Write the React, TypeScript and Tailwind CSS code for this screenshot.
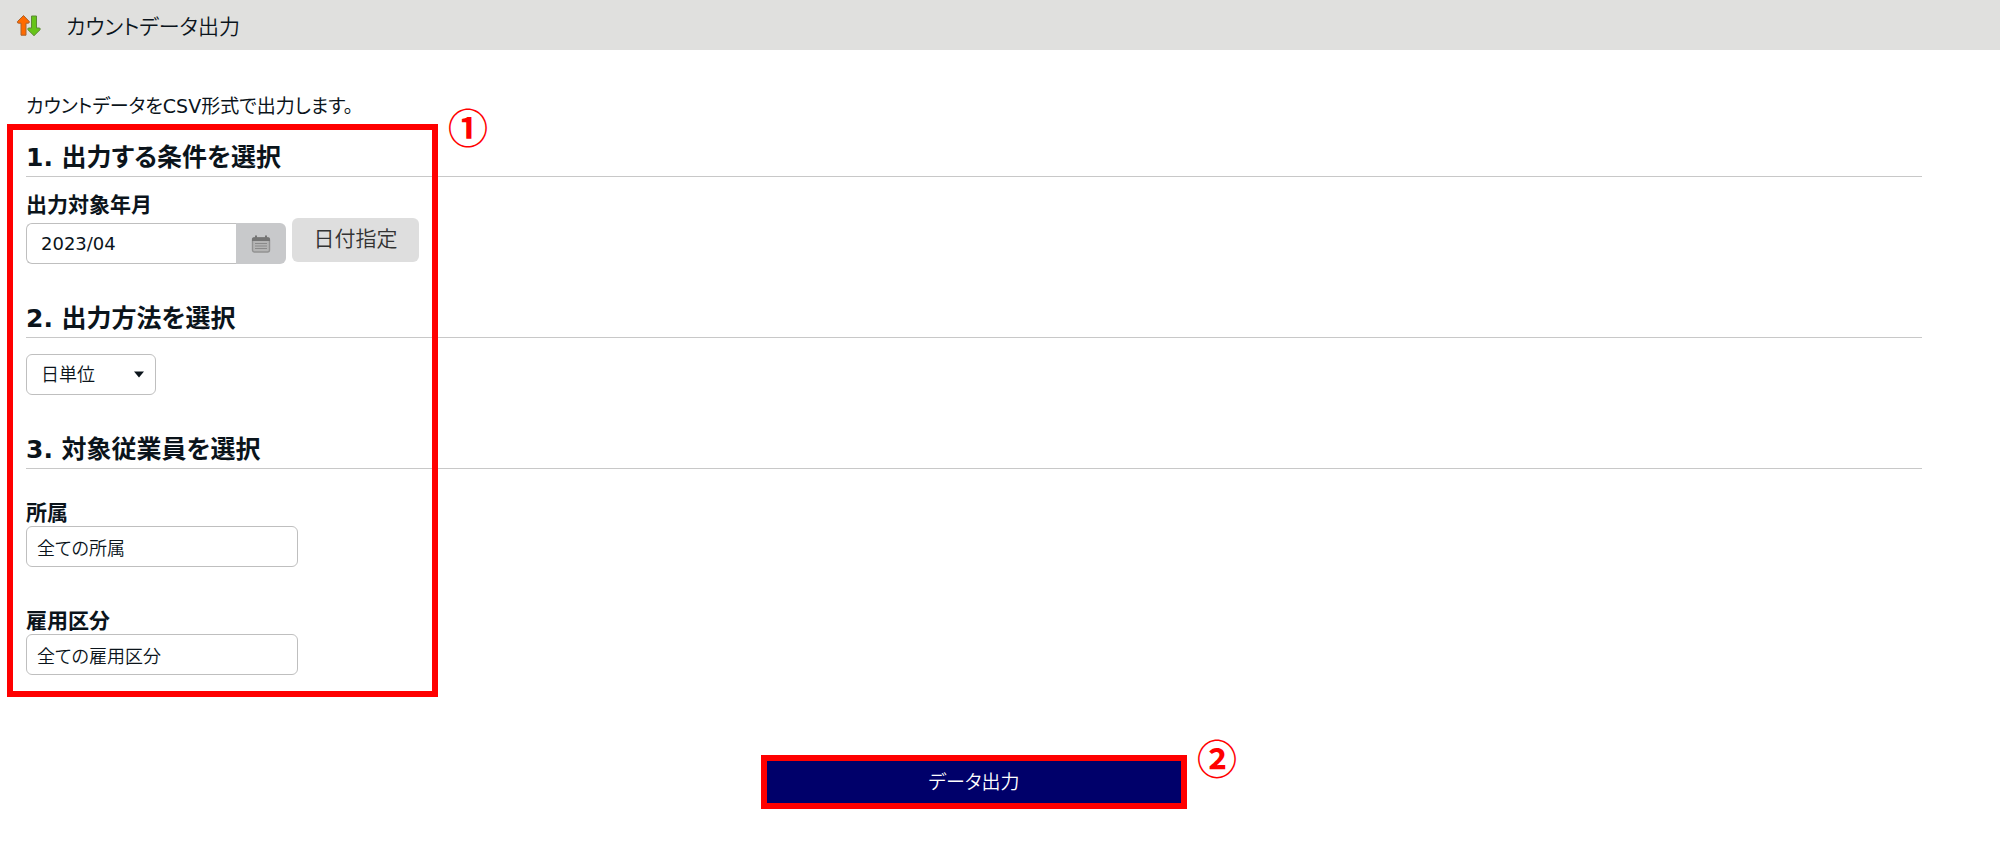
import { useState } from 'react';
import type { ReactNode } from 'react';

const ArrowsIcon = () => (
  <svg width="26" height="24" viewBox="0 0 26 24" aria-hidden="true">
    <path
      d="M7.5 1.5 L13.3 7.6 Q13.6 9.2 12 9.2 L10 9.2 L10 21.2 L5 21.2 L5 9.2 L2.6 9.2 Q1 9.2 1.4 7.6 Z"
      fill="#ff6a00"
      stroke="#a8622c"
      strokeWidth="1"
      strokeLinejoin="round"
    />
    <path
      d="M15.5 2 L20.5 2 L20.5 14 L23 14 Q24.6 14 24.2 15.6 L18 21.7 L11.8 15.6 Q11.4 14 13 14 L15.5 14 Z"
      fill="#66c418"
      stroke="#5c8a35"
      strokeWidth="1"
      strokeLinejoin="round"
    />
  </svg>
);

const CalendarIcon = () => (
  <svg width="20" height="18" viewBox="0 0 20 18" aria-hidden="true">
    <rect x="1.5" y="3" width="17" height="14" rx="2" fill="#b4b4b4" stroke="#929292" strokeWidth="1.4" />
    <path d="M1 6V4Q1 2.2 3 2.2H17Q19 2.2 19 4V6Z" fill="#757575" />
    <path d="M5 0.5V3M15 0.5V3" stroke="#757575" strokeWidth="2" />
    <path d="M4 8.5H16M4 11H16M4 13.5H16" stroke="#8a8a8a" strokeWidth="1.2" />
  </svg>
);

const SectionTitle = ({ children }: { children: ReactNode }) => (
  <h2 className="border-b border-[#c8c8c8] pt-1 text-[25px] leading-9 font-bold">{children}</h2>
);

const StepMark = ({ children }: { children: ReactNode }) => (
  <span className="absolute -top-6 -right-14 font-['Noto_Sans_CJK_JP',sans-serif] text-[40px] leading-none font-bold text-[#ff0000]">
    {children}
  </span>
);

const fieldClass = 'h-[41px] rounded-md border border-[#bfbfbf] bg-white text-lg outline-none';
const labelClass = 'block text-[21px] leading-[25px] font-bold';

const App = () => {
  const [month, setMonth] = useState('2023/04');
  const [department, setDepartment] = useState('全ての所属');
  const [employment, setEmployment] = useState('全ての雇用区分');

  return (
    <div className="min-h-screen bg-white font-['DejaVu_Sans','Noto_Sans_CJK_JP',sans-serif] font-[350] text-[#0b141b] [font-feature-settings:'palt']">
      <header className="flex h-[50px] items-center gap-6 bg-[#e0e0de] px-4 pt-0.5">
        <ArrowsIcon />
        <h1 className="font-['Noto_Sans_CJK_JP',sans-serif] text-[21px] font-[350]">カウントデータ出力</h1>
      </header>

      <main className="pt-10 pr-[78px] pb-9 pl-[26px]">
        <p className="text-[19px] leading-8 font-normal">カウントデータをCSV形式で出力します。</p>

        <form onSubmit={(e) => e.preventDefault()}>
          <div className="relative mt-0.5 pt-3 pb-[22px]">
            {/* Step 1 highlight */}
            <div className="pointer-events-none absolute inset-y-0 -left-[19px] w-[431px] border-6 border-[#ff0000]">
              <StepMark>①</StepMark>
            </div>

            <section>
              <SectionTitle>1. 出力する条件を選択</SectionTitle>
              <label htmlFor="month" className={`${labelClass} mt-4`}>
                出力対象年月
              </label>
              <div className="flex items-start gap-1.5">
                <div className="mt-[5px] flex">
                  <input
                    id="month"
                    value={month}
                    onChange={(e) => setMonth(e.target.value)}
                    className={`${fieldClass} w-[210px] rounded-r-none border-r-0 px-3.5 font-normal`}
                  />
                  <button
                    type="button"
                    aria-label="カレンダー"
                    className="flex h-[41px] w-[50px] items-center justify-center rounded-r-md bg-[#c8c9cb]"
                  >
                    <CalendarIcon />
                  </button>
                </div>
                <button type="button" className="h-11 w-[127px] rounded-md bg-[#dedede] text-[21px] text-[#333333]">
                  日付指定
                </button>
              </div>
            </section>

            <section className="mt-[33px]">
              <SectionTitle>2. 出力方法を選択</SectionTitle>
              <div className="relative mt-4 w-[130px]">
                <select aria-label="出力方法" className={`${fieldClass} w-full appearance-none px-3.5`}>
                  <option>日単位</option>
                  <option>月単位</option>
                </select>
                <svg className="pointer-events-none absolute top-[17px] right-3" width="10" height="7" viewBox="0 0 10 7" aria-hidden="true">
                  <path d="M0 0.5H10L5 6.5Z" fill="#0b141b" />
                </svg>
              </div>
            </section>

            <section className="mt-[33px]">
              <SectionTitle>3. 対象従業員を選択</SectionTitle>
              <div className="mt-8 flex flex-col items-start gap-[42px]">
                <div>
                  <label htmlFor="department" className={labelClass}>
                    所属
                  </label>
                  <input
                    id="department"
                    value={department}
                    onChange={(e) => setDepartment(e.target.value)}
                    className={`${fieldClass} w-[272px] px-2.5`}
                  />
                </div>
                <div>
                  <label htmlFor="employment" className={labelClass}>
                    雇用区分
                  </label>
                  <input
                    id="employment"
                    value={employment}
                    onChange={(e) => setEmployment(e.target.value)}
                    className={`${fieldClass} w-[272px] px-2.5`}
                  />
                </div>
              </div>
            </section>
          </div>

          {/* Step 2 highlight */}
          <div className="relative mx-auto mt-[58px] w-[426px] border-6 border-[#ff0000]">
            <button type="submit" className="block h-[42px] w-full bg-[#00006a] text-[19px] text-white">
              データ出力
            </button>
            <StepMark>②</StepMark>
          </div>
        </form>
      </main>
    </div>
  );
};

export default App;
